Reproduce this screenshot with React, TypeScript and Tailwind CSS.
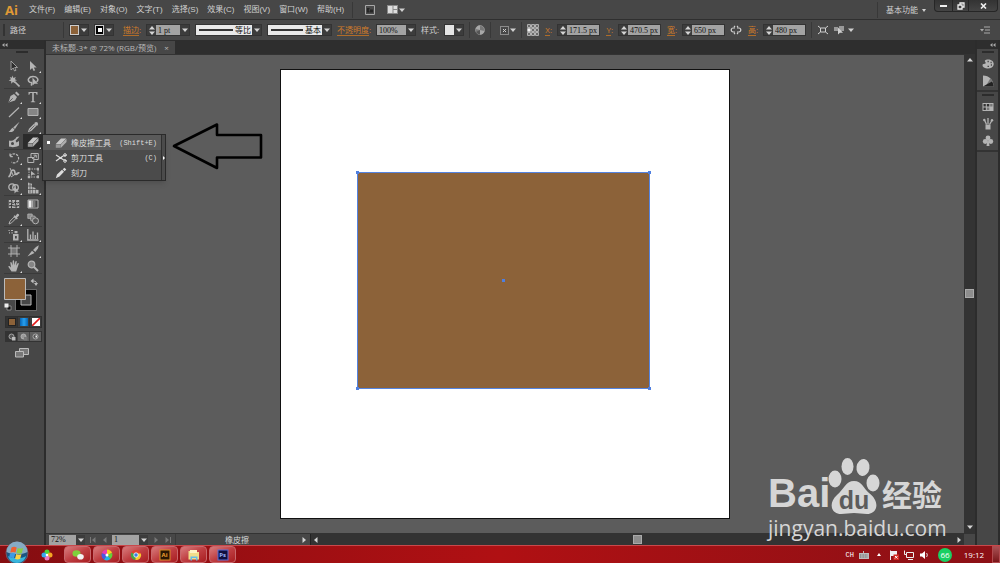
import { useState, type ReactNode } from 'react'

type IconName = keyof typeof toolPaths

const menus = ['文件(F)', '编辑(E)', '对象(O)', '文字(T)', '选择(S)', '效果(C)', '视图(V)', '窗口(W)', '帮助(H)']

const line = { fill: 'none', stroke: 'currentColor' }

const toolPaths = {
  选择: <path d="M3 1v9l2.200-2 1.400 3 1.400-.7-1.300-2.800H9.500z" fill="#2c2c2c" stroke="currentColor" strokeWidth=".8" />,
  直接选择: <path d="M3 1v9l2.200-2 1.400 3 1.600-.7-1.400-2.900H9.700z" />,
  魔棒: (
    <>
      <path d="M4.500.5l.9 2.400L7.800 2 6.900 4.200 9 5.300l-2.300.7.3 2.300-2-1.200L3.200 8.700l0-2.500L.7 5.400l2.200-1.200L1.800 2l2 .8z" />
      <path d="M6.500 6.500l5 5" {...line} strokeWidth="1.600" />
    </>
  ),
  套索: (
    <>
      <path d="M3 7.500C-.5 5 2 1.500 6 1.500s6.500 3 3.500 5.500M3 7.500c2.500-.5 2 1.500 1 3" {...line} strokeWidth="1.500" />
      <path d="M5.500 2.500v8l2-1.700 3.500 0z" />
    </>
  ),
  钢笔: (
    <>
      <path d="M.5 11.500L2.500 5l3.500-2 3 3-2 3.500z" />
      <path d="M1 11l3.700-3.700" stroke="#474747" strokeWidth=".8" />
      <path d="M7 2l1.500-1.500 3 3L10 5z" />
    </>
  ),
  文字: <path d="M1.500 1h9v2.800h-.9C9.400 2.500 9 2 8 2H6.800v7.500c0 .7.400.9 1.400 1v.7H3.800v-.7c1-.1 1.400-.3 1.400-1V2H4c-1 0-1.400.5-1.600 1.800h-.9z" />,
  直线段: <path d="M1 11L11 1.500" {...line} strokeWidth="1.200" />,
  矩形: <path d="M1 2.500h10v7H1z" fill="#868686" stroke="currentColor" />,
  画笔: (
    <>
      <path d="M11.500.8L7 8 5.200 6.500z" />
      <path d="M4.700 6.800l1.800 1.600C5.500 11 3 11.300.5 10.800c2-.6 2-3 4.200-4z" />
    </>
  ),
  铅笔: (
    <>
      <path d="M.8 11.300l1.200-3.500 5-5 2.300 2.300-5 5z" />
      <circle cx="9.200" cy="2.900" r="1.900" />
      <path d="M2.500 9.500l5-5" stroke="#474747" strokeWidth=".7" />
    </>
  ),
  斑点画笔: (
    <>
      <path d="M1 4.500c2 1 4-.5 6-.5l1.500 2.500L11 5v4.500c-3 2-8 2-10 1z" />
      <path d="M11.500.5L6 6.500 4.500 5.500C6 3 8 3 8.500 1z" />
      <circle cx="4.500" cy="7.500" r="1.500" fill="#474747" />
    </>
  ),
  橡皮擦: (
    <>
      <path d="M.8 7L6 1.500h5.200L6 7z" fill="#c8c8c8" />
      <path d="M.8 7.300h5v3.500h-5z" fill="#969696" />
      <path d="M6 7.300l5.500-5.500v3.300L6 10.800z" fill="#aeaeae" />
    </>
  ),
  旋转: <path d="M2 4.500A4.500 4.500 0 1 1 3.500 10M2 1.500v3.200h3.200" {...line} strokeDasharray="2.500 1" strokeWidth="1.200" />,
  比例缩放: (
    <>
      <path d="M.8 5.500h6v5h-6zM4 5V1.500h7.300v6H7" {...line} />
      <path d="M5 7l4-3.500M9.300 5.800V3.200H6.500" {...line} />
    </>
  ),
  宽度: (
    <>
      <path d="M.5 10C4 8 2 3 5 3s1 4.500 3 4.500S9 5 11.500 6" {...line} strokeWidth="1.700" />
      <path d="M2 1l3 7M3 10l6-4" {...line} />
    </>
  ),
  自由变换: (
    <>
      <path d="M2 2h9v8H2z" {...line} strokeDasharray="1.500 1" />
      <path d="M.8.800h2.400v2.400H.8zM9.800.8H12v2.400H9.800zM.8 8.800h2.400v2.400H.8zM9.800 8.800H12v2.400H9.800zM4 4l4.500 3.500-3 .3L4 9z" />
    </>
  ),
  形状生成器: (
    <>
      <circle cx="4" cy="5" r="3.200" {...line} strokeWidth="1.300" />
      <circle cx="7.500" cy="5.500" r="2.800" {...line} strokeWidth="1.300" />
      <path d="M6.500 4.500v7l1.700-1.700h2.600z" />
    </>
  ),
  透视网格: (
    <>
      <path d="M1 .5l4 1.200v9.800H1zM5.500 5l3 1v5.500h-3zM9 7l2.500 1v3.500H9z" />
      <path d="M1 4h4M1 7.500h10M3 1v10" stroke="#474747" strokeWidth=".7" />
    </>
  ),
  网格: (
    <>
      <path d="M.8 2h10.400v8H.8z" />
      <path d="M1 5c3-2 3 2 5 0s3 1 5-.5M1 8c3-2 4 1.500 10-.5M3.500 2c1.500 3-1 5 0 8M8 2c-2 3 1 5 0 8" fill="none" stroke="#333" />
    </>
  ),
  渐变: (
    <>
      <path d="M1 2h10v8H1z" fill="#444" stroke="currentColor" />
      <path d="M1.500 2.500H4v7H1.500z" fill="#eee" />
      <path d="M4 2.500h2.500v7H4z" fill="#aaa" />
      <path d="M6.500 2.500h2v7h-2z" fill="#777" />
    </>
  ),
  吸管: (
    <>
      <path d="M1 11l1-2.800L6.200 4l1.600 1.600-4.200 4.200z" {...line} />
      <path d="M5.500 3.200l1-1 1 .8L9 1c1-1 2.800.7 1.900 1.800L9 4.500l.8 1-1 1z" />
    </>
  ),
  混合: (
    <>
      <path d="M.8 1h4.400v4.400H.8z" fill="#8c8c8c" stroke="currentColor" strokeWidth=".8" />
      <rect x="3.500" y="3" width="5" height="5" rx="1.500" fill="#777" stroke="currentColor" strokeWidth=".8" />
      <circle cx="8.500" cy="7.800" r="3" fill="#555" stroke="currentColor" />
    </>
  ),
  符号喷枪: (
    <>
      <path d="M5 5h5.500v6.500H5zM6.500 2h3v2.200h-3z" />
      <path d="M7 7h1.800v2.500H7z" fill="#474747" />
      <path d="M.5 1.500h1.200M3 1.500h2M1 3.800h1M3.500 3.800h1.200" stroke="currentColor" strokeWidth="1.200" />
    </>
  ),
  柱形图: <path d="M.8 0v11h10.700M3.500 10V5.500M6 10V2.500M8.300 10V6M10.500 10V3.500" {...line} strokeWidth="1.300" />,
  画板: (
    <>
      <path d="M3 3h6v6H3z" fill="#777" />
      <path d="M3 0v12M9 0v12M0 3h12M0 9h12" {...line} strokeWidth=".9" />
    </>
  ),
  切片: <path d="M.5 11.500L5 5.800 7.500 8zM6 5l3-3 2.800-1.700L11 3.500 8.300 7z" />,
  抓手: <path d="M3.500 11.500L.5 7c-.5-1 .8-1.300 1.500-.5l1 1L2.300 2.700c0-1 1.200-1 1.400 0L4.500 5.500 4.700 1c.1-1 1.300-1 1.400 0L6.400 5.300 7.400 1.500c.3-1 1.500-.7 1.300.3L8.200 5.800l1.300-2.300c.5-.8 1.500-.3 1.200.6L9 9l-.8 2.500z" />,
  缩放: (
    <>
      <circle cx="4.500" cy="4.500" r="3.300" fill="#858585" stroke="currentColor" strokeWidth="1.200" />
      <path d="M7 7l4 4" {...line} strokeWidth="2" />
    </>
  ),
  剪刀: (
    <>
      <path d="M1 3l7 4.500M1 9l7-5M8 4l3.500-1M8 7.500l3.500 1.200" {...line} strokeWidth="1.200" />
      <circle cx="10" cy="3" r="1.300" {...line} />
      <circle cx="10" cy="9" r="1.300" {...line} />
    </>
  ),
  刻刀: <path d="M.8 11.300L2 7.500 7 2.800l2 2-4.500 4.700zM7.700 2.200L9.500.8l1.800 1.700-1.700 1.700z" />,
  颜色: (
    <>
      <path d="M6 1.500c4 0 6 2.500 5.700 5C11.300 9.300 8.500 10.800 5 10.500 2 10.300.3 8.500.5 7c.1-1.500 2-.8 3-1.500S2.200 3.500 3 2.600 4.500 1.500 6 1.500z" />
      <path d="M5.500 3.500h1.300M8.500 4.500h1.200M8.800 7h1.200M5.500 8.300h1.500" stroke="#474747" strokeWidth="1.300" />
    </>
  ),
  颜色参考: (
    <>
      <path d="M1 .5v11h10.500C11.500 5 7 .5 1 .5z" />
      <path d="M3.500 11.500l5-8.500c2 2 3 5 3 8.500z" fill="#777" />
      <path d="M1 11.500l9-5c1 1.500 1.500 3 1.500 5z" fill="#222" />
    </>
  ),
  色板: (
    <>
      <path d="M.5 2h11v8H.5z" />
      <path d="M1.500 3h2.300v2.500H1.500zM4.800 3h2.500v2.500H4.800zM1.500 6.500h2.300V9H1.500z" fill="#333" />
      <path d="M8.200 3h2.300v2.500H8.200zM4.800 6.500h2.500V9H4.800z" fill="#777" />
    </>
  ),
  画笔库: (
    <>
      <path d="M3.500 6.500h5v5h-5z" />
      <path d="M4.500 6.500L2.500 2M6 6V0M7.500 6.500L10 2.500" {...line} strokeWidth="1.300" />
      <circle cx="2.300" cy="2" r="1.200" />
      <circle cx="10" cy="2.300" r="1.200" />
    </>
  ),
  符号: (
    <>
      <circle cx="6" cy="3" r="2.400" />
      <circle cx="3.200" cy="6.500" r="2.400" />
      <circle cx="8.800" cy="6.500" r="2.400" />
      <path d="M5.300 5h1.400l.8 6h-3z" />
    </>
  ),
}

const toolGroups: { name: IconName; more?: boolean }[][] = [
  [{ name: '选择' }, { name: '直接选择', more: true }, { name: '魔棒' }, { name: '套索' }],
  [
    { name: '钢笔', more: true },
    { name: '文字', more: true },
    { name: '直线段', more: true },
    { name: '矩形', more: true },
    { name: '画笔' },
    { name: '铅笔', more: true },
    { name: '斑点画笔' },
    { name: '橡皮擦', more: true },
  ],
  [
    { name: '旋转', more: true },
    { name: '比例缩放', more: true },
    { name: '宽度', more: true },
    { name: '自由变换' },
    { name: '形状生成器', more: true },
    { name: '透视网格', more: true },
  ],
  [{ name: '网格' }, { name: '渐变' }, { name: '吸管', more: true }, { name: '混合' }],
  [{ name: '符号喷枪', more: true }, { name: '柱形图', more: true }],
  [{ name: '画板' }, { name: '切片', more: true }, { name: '抓手', more: true }, { name: '缩放' }],
]

const flyoutItems: { icon: IconName; label: string; shortcut?: string }[] = [
  { icon: '橡皮擦', label: '橡皮擦工具', shortcut: '(Shift+E)' },
  { icon: '剪刀', label: '剪刀工具', shortcut: '(C)' },
  { icon: '刻刀', label: '刻刀' },
]

function Icon({ name }: { name: IconName }) {
  return (
    <svg viewBox="0 0 12 12" className="size-3 shrink-0" fill="currentColor" aria-hidden="true">
      {toolPaths[name]}
    </svg>
  )
}

function Triangle({ dir = 'down' }: { dir?: 'up' | 'down' | 'left' | 'right' }) {
  const d = { down: 'M0 1.500h6L3 5z', up: 'M0 4.500h6L3 1z', left: 'M4.500 0v6L1 3z', right: 'M1.500 0v6L5 3z' }[dir]
  return (
    <svg viewBox="0 0 6 6" className="size-[6px] shrink-0" fill="currentColor" aria-hidden="true">
      <path d={d} />
    </svg>
  )
}

function DropButton({ label }: { label: string }) {
  return (
    <button
      type="button"
      aria-label={label}
      className="flex h-full w-[9px] shrink-0 items-center justify-center bg-[#3c3c3c] text-[#d4d4d4]"
    >
      <Triangle />
    </button>
  )
}

function Spinner({ label }: { label: string }) {
  return (
    <span className="flex h-full w-[9px] shrink-0 flex-col items-center justify-center bg-[#3c3c3c] text-[#d4d4d4]">
      <button type="button" aria-label={`${label} +`} className="block h-[5px]">
        <Triangle dir="up" />
      </button>
      <button type="button" aria-label={`${label} -`} className="block h-[5px]">
        <Triangle />
      </button>
    </span>
  )
}

function Field({ id, value, label }: { id: string; value: string; label?: string }) {
  return (
    <input
      id={id}
      defaultValue={value}
      aria-label={label}
      className="h-full min-w-0 flex-1 bg-[#a3a3a3] px-[2px] font-['Liberation_Serif','Noto_Sans_CJK_SC',serif] text-[8px] text-[#111] outline-none"
    />
  )
}

function OrangeLabel({ htmlFor, children, width }: { htmlFor: string; children: ReactNode; width: string }) {
  return (
    <label htmlFor={htmlFor} className={`shrink-0 whitespace-nowrap text-right text-[#d07c2a] ${width}`}>
      <span className="border-b border-[#b06c28]">{children}</span>:
    </label>
  )
}

function Box({ width, children }: { width: string; children: ReactNode }) {
  return (
    <div className={`flex h-3 shrink-0 items-center border border-[#333] bg-[#3c3c3c] ${width}`}>{children}</div>
  )
}

function StrokePicker({ label, value, width }: { label: string; value: string; width: string }) {
  return (
    <Box width={width}>
      <span className="flex h-full min-w-0 flex-1 items-center bg-[#e8e8e8] pl-[3px]">
        <span className="h-[2px] flex-1 bg-[#333]" />
        <select
          aria-label={label}
          className="w-[19px] appearance-none bg-transparent pl-[2px] text-[8px] leading-[10px] text-[#111] outline-none"
        >
          <option>{value}</option>
        </select>
      </span>
      <DropButton label={label} />
    </Box>
  )
}

function Divider() {
  return <span className="h-4 w-px shrink-0 bg-[#383838]" />
}

function MenuBar() {
  return (
    <header className="flex h-5 shrink-0 items-center border-b border-[#2f2f2f] pl-[5px]">
      <span className="w-6 font-['Open_Sans',sans-serif] text-[13px] leading-4 font-bold text-[#e09a35]">Ai</span>
      <nav className="flex gap-[9px] font-['Liberation_Sans','Noto_Sans_CJK_SC',sans-serif]">
        {menus.map((item) => (
          <button key={item} type="button" className="whitespace-nowrap">
            {item}
          </button>
        ))}
      </nav>
      <div className="ml-2 flex items-center gap-3">
        <Divider />
        <button type="button" aria-label="Bridge">
          <svg viewBox="0 0 10 10" className="size-[10px]">
            <path d="M.5.500h9v9h-9z" fill="#4a4a4a" stroke="#a8a8a8" />
            <path d="M2 3h2.500v1l-1 1 1 1v1.500H2zM5 4.500h3v3H5z" fill="#252525" />
          </svg>
        </button>
        <button type="button" aria-label="排列文档" className="flex items-center gap-px">
          <svg viewBox="0 0 11 9" className="h-[9px] w-[11px]">
            <path d="M0 0h11v9H0z" fill="#888" />
            <path d="M1 1h4.500v7H1zM6.500 1H10v3H6.500zM6.500 5H10v3H6.500z" fill="#ddd" />
          </svg>
          <Triangle />
        </button>
      </div>
      <div className="ml-auto flex h-full items-center gap-1">
        <Divider />
        <select aria-label="工作区" className="ml-1 w-8 appearance-none bg-transparent text-[8px] outline-none">
          <option>基本功能</option>
        </select>
        <span className="w-2 pt-[2px]">
          <svg viewBox="0 0 4 3" className="h-[3px] w-1" fill="currentColor">
            <path d="M0 0h4L2 3z" />
          </svg>
        </span>
        <div className="mr-[2px] flex h-3 self-start rounded-b-sm border border-t-0 border-[#262626] bg-gradient-to-b from-[#333] to-[#444] text-[#eee]">
          <button type="button" aria-label="最小化" className="flex w-[17px] items-center justify-center">
            <span className="h-[2px] w-[7px] bg-[#eee]" />
          </button>
          <button type="button" aria-label="还原" className="flex w-[17px] items-center justify-center border-x border-[#262626]">
            <svg viewBox="0 0 8 8" className="size-2" fill="none" stroke="currentColor" strokeWidth="1.300">
              <path d="M3 2.500V1h4v4H5.500M1 3h4v4H1z" />
            </svg>
          </button>
          <button type="button" aria-label="关闭" className="flex w-[28px] items-center justify-center">
            <svg viewBox="0 0 7 6" className="h-[6px] w-[7px]" fill="none" stroke="currentColor" strokeWidth="1.600">
              <path d="M1 .5l5 5M6 .5l-5 5" />
            </svg>
          </button>
        </div>
      </div>
    </header>
  )
}

function ControlBar() {
  return (
    <div className="flex h-5 shrink-0 items-center gap-[5px] overflow-hidden pl-[3px]">
      <span className="h-3 w-[2px] shrink-0 bg-[#333]" />
      <span className="w-12 shrink-0">路径</span>
      <Divider />
      <Box width="w-5">
        <button type="button" aria-label="填色" className="h-full flex-1 border border-[#ccc] bg-[#8c6239]" />
        <DropButton label="填色选项" />
      </Box>
      <Box width="w-5">
        <button type="button" aria-label="描边颜色" className="flex h-full flex-1 items-center justify-center border border-[#ccc] bg-black">
          <span className="size-1 bg-white" />
        </button>
        <DropButton label="描边颜色选项" />
      </Box>
      <OrangeLabel htmlFor="stroke" width="w-[22px]">描边</OrangeLabel>
      <Box width="w-11">
        <Spinner label="描边" />
        <Field id="stroke" value="1 pt" />
        <DropButton label="描边粗细" />
      </Box>
      <StrokePicker label="变量宽度" value="等比" width="w-[67px]" />
      <StrokePicker label="画笔定义" value="基本" width="w-[65px]" />
      <OrangeLabel htmlFor="opacity" width="w-[34px]">不透明度</OrangeLabel>
      <Box width="w-10">
        <Field id="opacity" value="100%" />
        <DropButton label="不透明度选项" />
      </Box>
      <span className="w-[18px] shrink-0 whitespace-nowrap">样式:</span>
      <Box width="w-5">
        <button type="button" aria-label="图形样式" className="h-full flex-1 bg-[#e4e4e4]" />
        <DropButton label="样式选项" />
      </Box>
      <Divider />
      <button type="button" aria-label="重新着色" className="shrink-0">
        <svg viewBox="0 0 10 10" className="size-[10px]">
          <circle cx="5" cy="5" r="4.500" fill="#777" stroke="#aaa" strokeWidth=".6" />
          <path d="M5 5V.5A4.500 4.500 0 0 0 .8 4zM5 5l4.400 1A4.500 4.500 0 0 1 5 9.500z" fill="#a8a8a8" />
          <path d="M5 5v4.500A4.500 4.500 0 0 1 1 7z" fill="#555" />
        </svg>
      </button>
      <Divider />
      <button type="button" aria-label="对齐" className="flex w-5 shrink-0 items-center justify-end gap-px">
        <svg viewBox="0 0 9 9" className="size-[9px]" {...line}>
          <path d="M.5.500h8v8h-8z" strokeDasharray="1 1" />
          <path d="M3 3l3 3M6 3L3 6" />
        </svg>
        <Triangle />
      </button>
      <Divider />
      <button type="button" aria-label="参考点" className="shrink-0">
        <svg viewBox="0 0 12 12" className="size-3" {...line} strokeWidth=".9">
          <path d="M2 2h8v8H2zM2 6h8M6 2v8" strokeWidth=".5" />
          {[2, 6, 10].map((y) =>
            [2, 6, 10].map((x) => (
              <rect key={`${x}-${y}`} x={x - 1.3} y={y - 1.3} width="2.600" height="2.600" fill={x === 2 && y === 6 ? '#fff' : '#474747'} />
            )),
          )}
        </svg>
      </button>
      <OrangeLabel htmlFor="pos-x" width="w-2">X</OrangeLabel>
      <Box width="w-[43px]">
        <Spinner label="X" />
        <Field id="pos-x" value="171.5 px" />
      </Box>
      <OrangeLabel htmlFor="pos-y" width="w-2">Y</OrangeLabel>
      <Box width="w-[43px]">
        <Spinner label="Y" />
        <Field id="pos-y" value="470.5 px" />
      </Box>
      <OrangeLabel htmlFor="width" width="w-[11px]">宽</OrangeLabel>
      <Box width="w-[43px]">
        <Spinner label="宽" />
        <Field id="width" value="650 px" />
      </Box>
      <button type="button" aria-label="约束宽度和高度比例" className="shrink-0">
        <svg viewBox="0 0 12 10" className="h-[10px] w-3" {...line} strokeWidth="1.200">
          <path d="M5 3H3.200a2 2 0 0 0 0 4H5M7 3h1.800a2 2 0 0 1 0 4H7M4 1l1 1M8 1L7 2M4 9l1-1M8 9L7 8" />
        </svg>
      </button>
      <OrangeLabel htmlFor="height" width="w-[11px]">高</OrangeLabel>
      <Box width="w-[43px]">
        <Spinner label="高" />
        <Field id="height" value="480 px" />
      </Box>
      <Divider />
      <button type="button" aria-label="隔离选中的对象" className="shrink-0">
        <svg viewBox="0 0 12 10" className="h-[10px] w-3" {...line}>
          <path d="M3.500 3h5v4h-5zM1 1l2.500 2M11 1L8.500 3M1 9l2.500-2M11 9L8.500 7" />
        </svg>
      </button>
      <button type="button" aria-label="选择类似的对象" className="flex shrink-0 items-center gap-1">
        <svg viewBox="0 0 10 10" className="size-[10px]" fill="currentColor">
          <path d="M0 2h4v4H0zM5 1h5v5H5z" fill="#999" />
          <path d="M4 2.500v7l2-1.700h3z" />
        </svg>
        <Triangle />
      </button>
      <button type="button" aria-label="面板菜单" className="ml-auto mr-[10px] shrink-0">
        <svg viewBox="0 0 10 8" className="h-2 w-[10px]" fill="#aaa">
          <path d="M0 3h4L2 5.500zM4 .5h6v1H4zM5 3.500h5v1H5zM4 6.500h6v1H4z" />
        </svg>
      </button>
    </div>
  )
}

function EraserFlyout() {
  return (
    <div className="absolute top-0 left-full z-20 flex border border-[#2a2a2a] bg-[#4b4b4b] text-[#dcdcdc] shadow-md">
      <ul className="w-[118px]">
        {flyoutItems.map((item, i) => (
          <li key={item.label} className={i === 0 ? 'bg-[#5a5a5a]' : ''}>
            <button type="button" className="flex h-[15px] w-full items-center pr-1 pl-1">
              <span className={`mr-[5px] size-[3px] ${i === 0 ? 'bg-white' : ''}`} />
              <Icon name={item.icon} />
              <span className="ml-1 whitespace-nowrap">{item.label}</span>
              <span className="ml-auto font-['Liberation_Mono',monospace] text-[7px]">{item.shortcut}</span>
            </button>
          </li>
        ))}
      </ul>
      <button type="button" aria-label="拖出" className="flex w-1 items-center justify-center border-l border-[#2f2f2f]">
        <svg viewBox="0 0 2 4" className="h-1 w-[2px] shrink-0" fill="white">
          <path d="M0 0v4l2-2z" />
        </svg>
      </button>
    </div>
  )
}

function DockHeader() {
  return (
    <div className="flex h-[9px] shrink-0 items-center bg-[#2e2e2e] px-[2px] text-[#aaa]">
      <svg viewBox="0 0 6 4" className="h-1 w-[6px]" fill="currentColor">
        <path d="M2.500 0v4L0 2zM5.500 0v4L3 2z" />
      </svg>
    </div>
  )
}

function ColorControls() {
  return (
    <>
      <svg viewBox="0 0 38 36" className="mt-[3px] ml-1 h-9 w-[38px]" role="img" aria-label="填色和描边">
        <path d="M11.500 12.500h21v21h-21z" fill="#000" stroke="#8a8a8a" strokeWidth=".7" />
        <path d="M17 18h10v10H17z" fill="#474747" stroke="#bbb" />
        <path d="M.5 1.500h21v21H.5z" fill="#8c6239" stroke="#bbb" />
        <path d="M29.500 1.500v5L26.500 4zM30 6h4l-2 3z" fill="#bbb" />
        <path d="M29 4c3 0 3.500 1 3.500 3" fill="none" stroke="#bbb" />
        <path d="M3 29h4v4H3z" fill="#111" stroke="#aaa" strokeWidth=".7" />
        <path d="M.5 26.500h4v4h-4z" fill="#eee" />
      </svg>
      <div className="mt-[3px] ml-[5px] flex h-3 w-[37px] border border-[#2f2f2f] bg-[#3c3c3c]">
        <button type="button" aria-label="颜色" className="flex flex-1 items-center justify-center bg-[#333]">
          <span className="size-2 border border-[#222] bg-[#8c6239]" />
        </button>
        <button type="button" aria-label="渐变填色" className="flex flex-1 items-center justify-center border-x border-[#2f2f2f]">
          <span className="size-2 bg-gradient-to-r from-[#0664b4] via-[#28a0ee] to-[#0664b4]" />
        </button>
        <button type="button" aria-label="无" className="flex flex-1 items-center justify-center">
          <svg viewBox="0 0 8 8" className="size-2">
            <path d="M0 0h8v8H0z" fill="#fff" />
            <path d="M0 8l8-8" stroke="#e21b1b" strokeWidth="1.600" />
          </svg>
        </button>
      </div>
      <div className="mt-[3px] ml-[5px] flex h-[11px] w-[37px] border border-[#333] bg-[#606060]">
        {['正常绘图', '背面绘图', '内部绘图'].map((mode, i) => (
          <button
            key={mode}
            type="button"
            aria-label={mode}
            className={`flex flex-1 items-center justify-center ${i === 0 ? 'bg-[#333]' : 'border-l border-[#444]'}`}
          >
            <svg viewBox="0 0 8 8" className="size-2">
              <circle cx="3.500" cy="3.500" r="2.500" fill={i === 1 ? '#999' : '#555'} stroke="#bbb" strokeWidth=".8" />
              {i < 2 && <path d="M4 4h3.500v3.500H4z" fill={i === 0 ? '#bbb' : '#777'} />}
              {i === 2 && <path d="M3.500 2.500H5v2H3.500z" fill="#eee" />}
            </svg>
          </button>
        ))}
      </div>
      <button type="button" aria-label="更改屏幕模式" className="mt-[6px] ml-[15px]">
        <svg viewBox="0 0 14 10" className="h-[10px] w-[14px]" fill="#777" stroke="#bbb">
          <path d="M4.500.500h9v6h-9z" />
          <path d="M.5 3.500h8v5.500h-8z" />
        </svg>
      </button>
    </>
  )
}

function ToolPanel() {
  const [active, setActive] = useState<IconName>('橡皮擦')

  return (
    <aside className="relative z-10 flex w-[46px] shrink-0 flex-col border-r-2 border-[#2c2c2c] bg-[#474747] text-[#b4b4b4]">
      <DockHeader />
      <div className="mx-auto my-[2px] h-[2px] w-3 bg-[#2c2c2c]" />
      <div className="mt-[3px]">
        {toolGroups.map((group) => (
          <div key={group[0].name} className="mr-[2px] ml-1 grid grid-cols-2 border-b border-[#3a3a3a]">
            {group.map(({ name, more }) => (
              <div key={name} className="relative">
                <button
                  type="button"
                  aria-label={name}
                  onClick={() => setActive(name)}
                  className={`relative flex h-[15px] w-full items-center justify-center ${active === name ? 'bg-[#2b2b2b]' : ''}`}
                >
                  <Icon name={name} />
                  {more && (
                    <svg viewBox="0 0 2 2" className="absolute right-px bottom-0 size-[2px]" fill="#ddd">
                      <path d="M2 0v2H0z" />
                    </svg>
                  )}
                </button>
                {name === '橡皮擦' && <EraserFlyout />}
              </div>
            ))}
          </div>
        ))}
      </div>
      <ColorControls />
    </aside>
  )
}

function Watermark() {
  return (
    <div className="pointer-events-none absolute right-[18px] bottom-[-9px] z-10 w-[178px] font-['Open_Sans','Noto_Sans_CJK_SC',sans-serif] text-[#d6d6d6]">
      <div className="flex h-[60px] items-end">
        <span className="w-[60px] font-['Liberation_Sans',sans-serif] text-[40px] leading-[42px] font-bold">Bai</span>
        <span className="relative h-[56px] w-[52px]">
          <svg viewBox="0 0 52 56" className="h-[56px] w-[52px]" fill="currentColor">
            <ellipse cx="7" cy="21" rx="6.500" ry="8.500" />
            <ellipse cx="19.500" cy="8.500" rx="6" ry="8.500" />
            <ellipse cx="35" cy="9.500" rx="6.500" ry="8.500" transform="rotate(8 35 9.500)" />
            <ellipse cx="45" cy="25" rx="6.500" ry="8.500" />
            <path d="M26 23c8 0 10 8 15 12 12 9 8 21-2 21-5 0-8-1-13-1s-8 1-13 1C3 56 0 45 9 37c7-6 9-14 17-14z" />
          </svg>
          <span className="absolute inset-x-0 bottom-0 text-center font-['Liberation_Sans',sans-serif] text-[25px] leading-[28px] font-bold text-[#5c5c5c]">
            du
          </span>
        </span>
        <span className="ml-[2px] text-[30px] leading-[38px] font-bold whitespace-nowrap">经验</span>
      </div>
      <div className="text-[21px] leading-[28px]">jingyan.baidu.com</div>
    </div>
  )
}

function Canvas() {
  return (
    <main className="relative flex min-w-0 flex-1 items-center justify-center border-t border-[#333] bg-[#5c5c5c]">
      <svg viewBox="0 0 450 450" className="size-[450px]" role="img" aria-label="画板" shapeRendering="crispEdges">
        <path d="M0 0h450v450H0z" fill="#111" />
        <path d="M1 1h448v448H1z" fill="#fff" />
        <path d="M77 103h293v217H77z" fill="#5584e0" />
        <path d="M78 104h291v215H78z" fill="#8c6239" />
        {[[77, 103], [369, 103], [77, 319], [369, 319], [223, 211]].map(([x, y]) => (
          <rect key={`${x}-${y}`} x={x - 1} y={y - 1} width="3" height="3" fill="#4f7fe0" />
        ))}
      </svg>
      <svg viewBox="0 0 94 50" className="absolute top-[66px] left-[125px] h-[50px] w-[94px]" fill="none" stroke="#000" strokeWidth="2.600">
        <path d="M3 25L46 3.500V14H90V36.500H46V47z" strokeLinejoin="round" />
      </svg>
      <Watermark />
    </main>
  )
}

function PageButtons({ next }: { next?: boolean }) {
  return (
    <span className="flex w-[18px] shrink-0 items-center justify-between text-[#777]">
      <button type="button" aria-label={next ? '下一页' : '首页'} className={next ? '' : 'border-l border-[#777]'}>
        <Triangle dir={next ? 'right' : 'left'} />
      </button>
      <button type="button" aria-label={next ? '末页' : '上一页'} className={next ? 'border-r border-[#777]' : ''}>
        <Triangle dir={next ? 'right' : 'left'} />
      </button>
    </span>
  )
}

function StatusBar() {
  return (
    <footer className="flex h-3 shrink-0 items-center border-t border-[#333] bg-[#474747] text-[#d4d4d4]">
      <div className="ml-[3px] flex h-[10px] w-9 shrink-0">
        <Field id="zoom" value="72%" label="缩放比例" />
        <DropButton label="缩放级别" />
      </div>
      <span className="w-[5px]" />
      <PageButtons />
      <div className="ml-1 flex h-[10px] w-9 shrink-0">
        <Field id="page" value="1" label="画板" />
        <DropButton label="画板导航" />
      </div>
      <span className="w-[5px]" />
      <PageButtons next />
      <span className="ml-1 w-[123px] shrink-0 border-l border-[#3a3a3a] text-center">橡皮擦</span>
      <button type="button" aria-label="状态选项" className="flex w-3 shrink-0 justify-center">
        <Triangle dir="right" />
      </button>
      <div className="flex h-full flex-1 items-center border-l border-[#222] bg-[#333] px-[2px]">
        <Triangle dir="left" />
        <div className="flex flex-1 justify-center">
          <span className="size-[9px] border border-[#aaa] bg-[#8d8d8d]" />
        </div>
        <Triangle dir="right" />
      </div>
      <span className="w-[11px] shrink-0" />
    </footer>
  )
}

function RightDock() {
  const groups: IconName[][] = [['颜色', '颜色参考'], ['色板', '画笔库', '符号']]
  return (
    <aside className="flex w-[25px] shrink-0 flex-col border-x-2 border-[#2c2c2c] bg-[#474747] text-[#b4b4b4]">
      <div className="flex justify-end bg-[#2e2e2e]">
        <DockHeader />
      </div>
      {groups.map((group) => (
        <div key={group[0]} className="flex flex-col items-center border-b-2 border-[#333] pb-px">
          <span className="mt-[2px] mb-[2px] h-[2px] w-3 bg-[#2c2c2c]" />
          {group.map((name) => (
            <button key={name} type="button" aria-label={name} className="flex h-[17px] items-center">
              <Icon name={name} />
            </button>
          ))}
        </div>
      ))}
    </aside>
  )
}

const apps = [
  {
    name: '微信',
    art: (
      <>
        <ellipse cx="4.500" cy="4.500" rx="4" ry="3.300" fill="#7fd13b" />
        <ellipse cx="8.500" cy="7.800" rx="3.300" ry="2.800" fill="#f2f2f2" />
      </>
    ),
  },
  {
    name: '浏览器',
    art: (
      <>
        <path d="M6 6V.5A5.500 5.500 0 0 1 11 4z" fill="#f7d21e" />
        <path d="M6 6l5-2a5.500 5.500 0 0 1-1.500 6z" fill="#5fd03a" />
        <path d="M6 6l3.500 4A5.500 5.500 0 0 1 3 10.500z" fill="#21b6e8" />
        <path d="M6 6l-3 4.500A5.500 5.500 0 0 1 1 4z" fill="#4a59e0" />
        <path d="M6 6L1 4A5.500 5.500 0 0 1 6 .5z" fill="#e83bb4" />
        <circle cx="6" cy="6" r="1.500" fill="#fff" />
      </>
    ),
  },
  {
    name: 'Chrome',
    art: (
      <>
        <circle cx="6" cy="6" r="5" fill="#e2402e" />
        <path d="M6 6L1.500 3.500A5 5 0 0 0 5.500 11z" fill="#43a648" />
        <path d="M6 4.500h4.800A5 5 0 0 1 5.500 11z" fill="#f7cb2d" />
        <circle cx="6" cy="6" r="2.200" fill="#3d7de0" stroke="#fff" strokeWidth=".8" />
      </>
    ),
  },
  {
    name: 'Illustrator',
    art: <rect x="1" y="1" width="10" height="10" fill="#2b1703" stroke="#d98b27" />,
    text: 'Ai',
    color: 'text-[#f0a030]',
  },
  {
    name: '资源管理器',
    art: (
      <>
        <path d="M.5 2h4l1 1h5.500v7.500H.5z" fill="#f2dd8a" />
        <path d="M2 1h7v3H2z" fill="#fff3c4" />
        <path d="M2.500 11.500V7.500h7v4H8V9H4v2.500z" fill="#65bde8" />
      </>
    ),
  },
  {
    name: 'Photoshop',
    art: <rect x="1" y="1" width="10" height="10" fill="#10103f" stroke="#5d6fd8" />,
    text: 'Ps',
    color: 'text-[#9db4ff]',
  },
]

function Taskbar() {
  return (
    <div className="relative z-20 flex h-[18px] shrink-0 items-center border-t border-[#c9484b] bg-gradient-to-r from-[#850d11] via-[#b01013] to-[#8b1015] font-['Open_Sans','Noto_Sans_CJK_SC',sans-serif] text-white">
      <button type="button" aria-label="开始" className="-mt-1 ml-[5px] shrink-0">
        <svg viewBox="0 0 24 24" className="size-6">
          <circle cx="12" cy="12" r="11" fill="#1c5580" stroke="#7a5560" />
          <path d="M1.500 11a10.500 10.500 0 0 1 21 0c-6 3-15 3-21 0z" fill="#86abc4" />
          <path d="M3 15c4 3 14 3 18 0-1 4-4 7-9 7s-8-3-9-7z" fill="#38b5dc" />
          <path d="M6.500 6.500c2-1 3.500-.8 5.200 0l-1.200 5c-1.700-.8-3.300-.8-5.200 0z" fill="#ee6030" />
          <path d="M12.700 7c1.800.8 3.300.8 5.500 0l-1.400 5c-1.800.7-3.500.7-5.300 0z" fill="#8dcd44" />
          <path d="M5 12.600c1.900-.8 3.500-.8 5.200 0l-1.200 4.800c-1.700-.8-3.300-.8-5.200 0z" fill="#3c9be4" />
          <path d="M11.200 13c1.800.8 3.500.8 5.300 0l-1.300 4.800c-1.700.8-3.400.8-5.200 0z" fill="#fbd243" />
        </svg>
      </button>
      <button type="button" aria-label="花瓣" className="mr-[11px] ml-3 shrink-0">
        <svg viewBox="0 0 12 12" className="size-3">
          <circle cx="6" cy="3" r="2.500" fill="#50d43a" />
          <circle cx="9" cy="6" r="2.500" fill="#f5a623" />
          <circle cx="6" cy="9" r="2.500" fill="#ee77c4" />
          <circle cx="3" cy="6" r="2.500" fill="#38a7ee" />
          <circle cx="6" cy="6" r="1.300" fill="#fff" />
        </svg>
      </button>
      <div className="flex gap-[2px]">
        {apps.map((app) => (
          <button
            key={app.name}
            type="button"
            aria-label={app.name}
            className="relative flex h-[17px] w-[27px] items-center justify-center rounded-sm border border-[#c8686c] bg-gradient-to-br from-[#d87b7e] via-[#bf3e42] to-[#a81a1f]"
          >
            <svg viewBox="0 0 12 12" className="size-3">
              {app.art}
            </svg>
            {app.text && (
              <span className={`absolute text-[6px] leading-[8px] font-bold ${app.color}`}>{app.text}</span>
            )}
          </button>
        ))}
      </div>
      <div className="ml-auto flex h-full items-center gap-[5px]">
        <span className="font-['Liberation_Mono',monospace] text-[7px]">CH</span>
        <svg viewBox="0 0 10 8" className="h-2 w-[10px]">
          <path d="M0 2h10v6H0zM4 0h1v2H4z" fill="#bbb" />
          <path d="M1 4h8M1 6h8" stroke="#666" strokeDasharray="1 .6" />
        </svg>
        <span className="flex w-[10px] justify-center">
          <svg viewBox="0 0 4 3" className="h-[3px] w-1" fill="white">
            <path d="M2 0l2 3H0z" />
          </svg>
        </span>
        <svg viewBox="0 0 10 10" className="size-[10px]">
          <path d="M1 .5h1V10H1zM2 1h6v5H2z" fill="#eee" />
          <path d="M4.500 4.500H10V10H4.500z" fill="#d52a20" />
          <path d="M6 6l2.500 2.500M8.500 6L6 8.500" stroke="#fff" />
        </svg>
        <svg viewBox="0 0 10 10" className="size-[10px]" fill="none" stroke="#eee">
          <path d="M2.500 2.500h7v5h-7zM.5.500v4h2M4 9.500h5" />
        </svg>
        <svg viewBox="0 0 10 10" className="size-[10px]">
          <path d="M1 3.500h2L6 1v8L3 6.500H1z" fill="#fff" />
          <path d="M7.500 3c1 1.300 1 2.700 0 4" fill="none" stroke="#ddd" />
        </svg>
        <span className="mx-1 flex size-[14px] items-center justify-center rounded-full bg-[#19cf63] text-[8px] leading-none">66</span>
        <time className="w-[26px] text-center text-[8px]">19:12</time>
        <button type="button" aria-label="显示桌面" className="h-full w-2 border border-[#b04a4e] bg-gradient-to-b from-[#a85054] to-[#7a1218]" />
      </div>
    </div>
  )
}

export default function App() {
  return (
    <div className="flex h-screen flex-col overflow-hidden bg-[#474747] font-['Open_Sans','Noto_Sans_CJK_SC',sans-serif] text-[8px] leading-3 text-[#d0d0d0] select-none">
      <MenuBar />
      <ControlBar />
      <div className="flex min-h-0 flex-1">
        <ToolPanel />
        <div className="flex min-w-0 flex-1 flex-col">
          <div className="flex h-[14px] shrink-0 items-end bg-[#2e2e2e]">
            <div className="flex h-[13px] items-center gap-2 bg-[#474747] px-[6px] text-[#b8b8b8]">
              <span>未标题-3* @ 72% (RGB/预览)</span>
              <button type="button" aria-label="关闭文档">×</button>
            </div>
          </div>
          <div className="flex min-h-0 flex-1">
            <Canvas />
            <div className="flex w-[11px] shrink-0 flex-col items-center bg-[#333] py-[3px] text-[#d4d4d4]">
              <Triangle dir="up" />
              <div className="flex flex-1 items-center">
                <span className="size-[9px] border border-[#aaa] bg-[#8d8d8d]" />
              </div>
              <Triangle />
            </div>
          </div>
          <StatusBar />
        </div>
        <RightDock />
      </div>
      <Taskbar />
    </div>
  )
}
